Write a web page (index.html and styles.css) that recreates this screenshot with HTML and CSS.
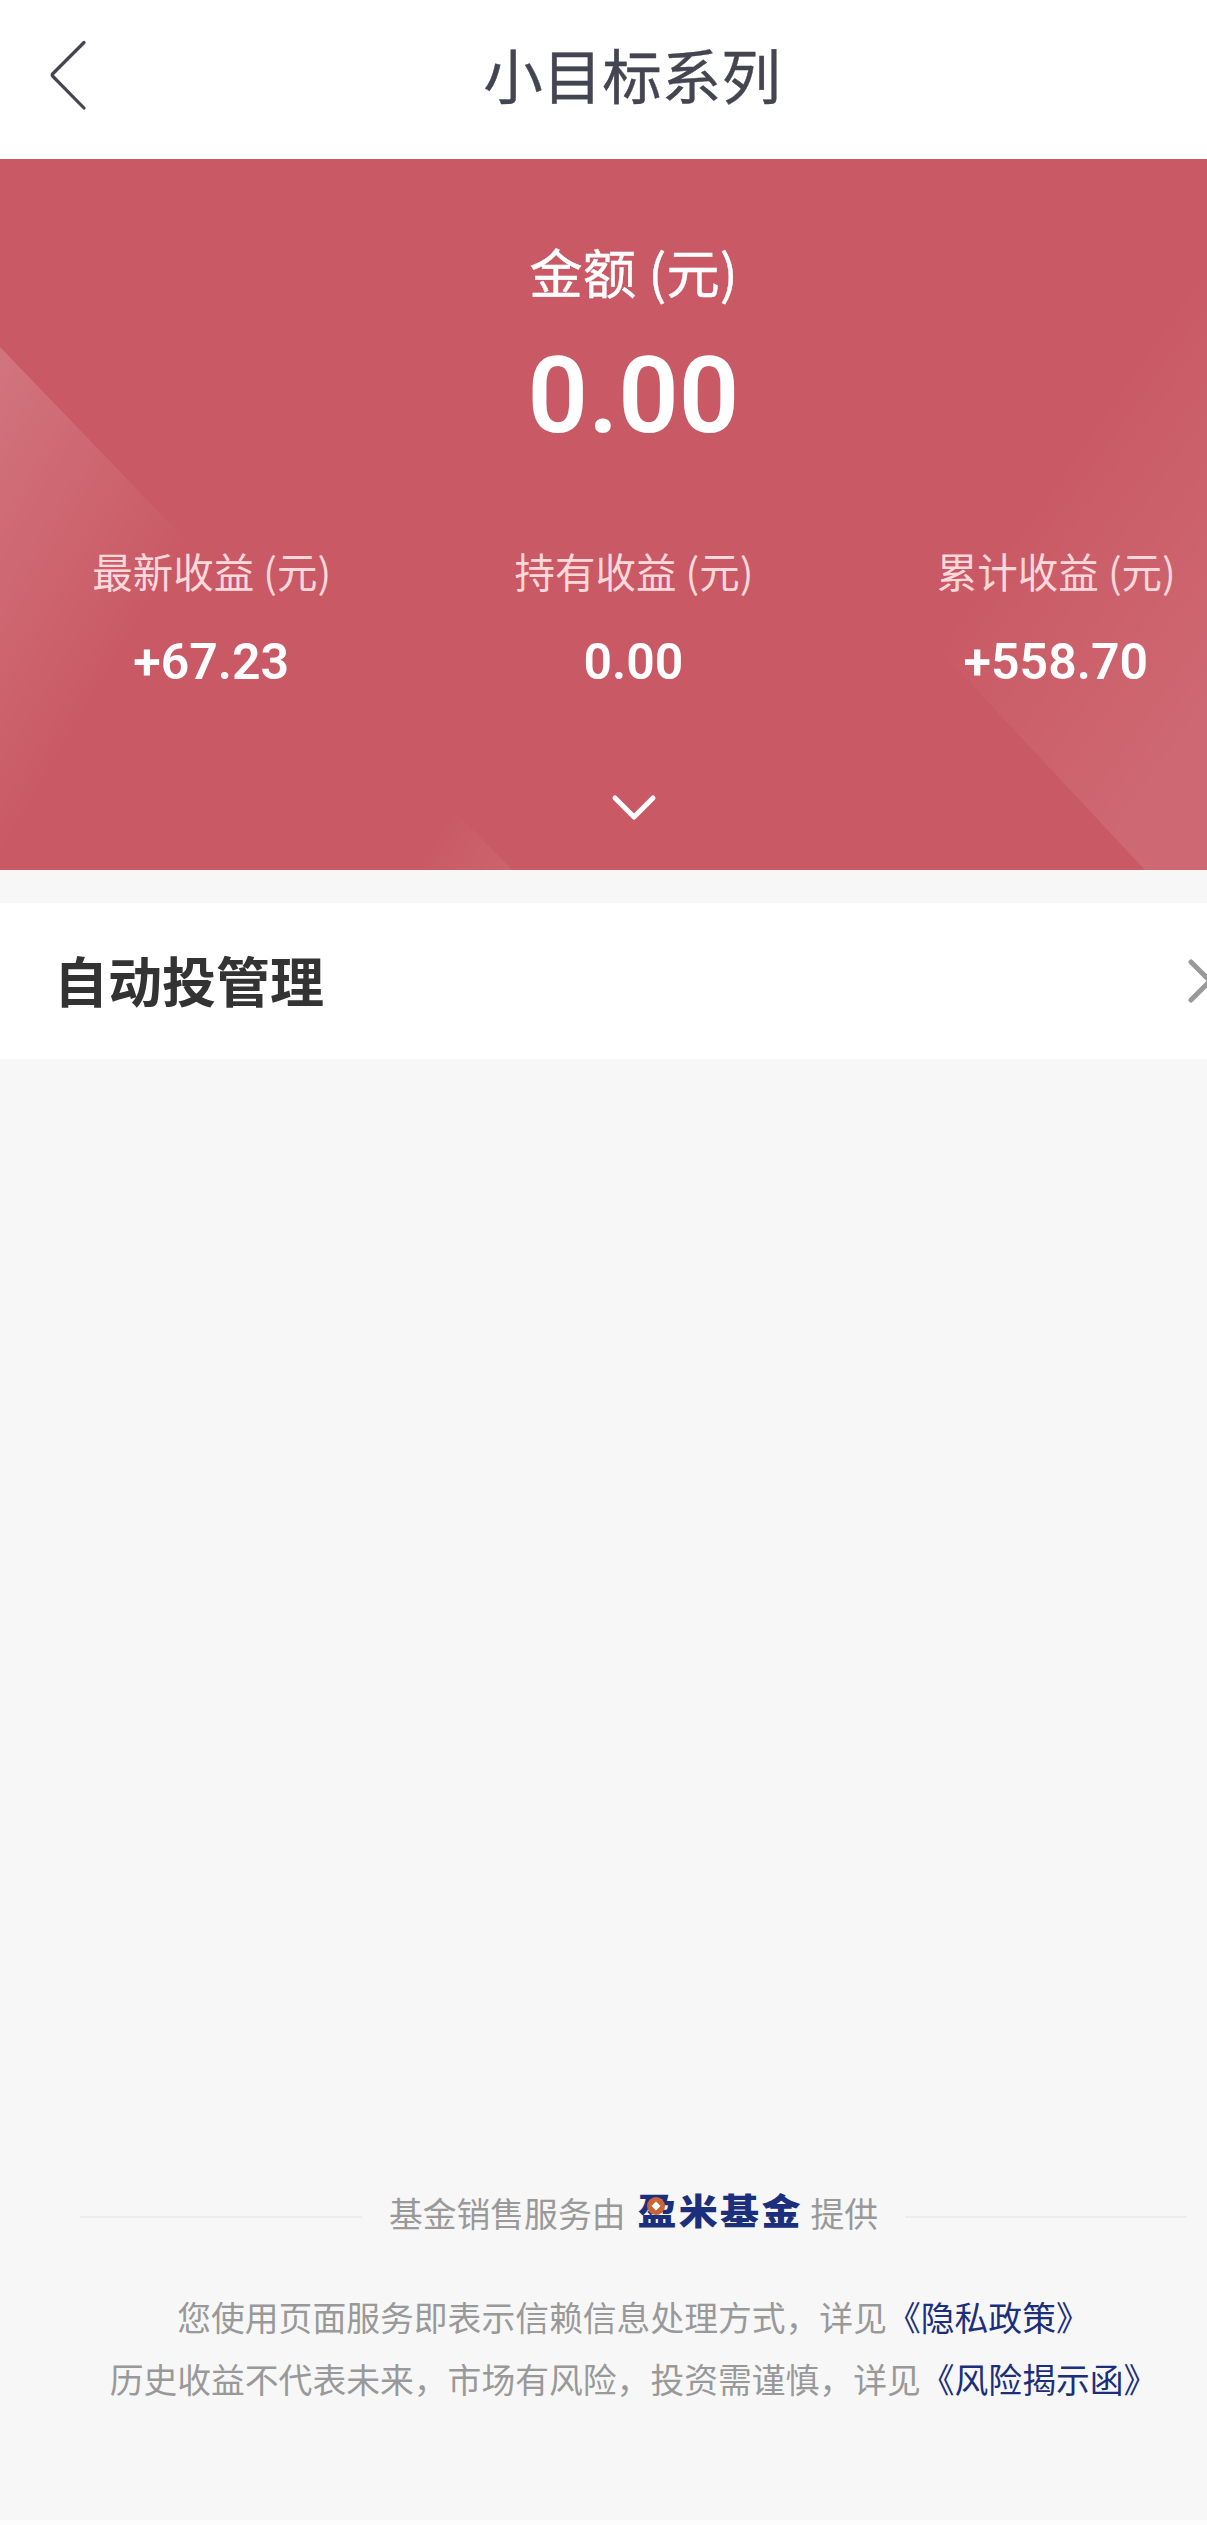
FILE: index.html
```html
<!DOCTYPE html>
<html lang="zh-CN">
<head>
<meta charset="utf-8">
<title>小目标系列</title>
<link rel="stylesheet" href="styles.css">
</head>
<body>
<div class="page">
  <header class="navbar">
    <svg class="back" width="40" height="72" viewBox="0 0 40 72"><path d="M36 3.500L5 34.500Q3.500 36 5 37.500L36 69"/></svg>
    <h1 class="title">小目标系列</h1>
  </header>
  <section class="summary">
    <svg class="facets" width="1267" height="711" viewBox="0 0 1267 711">
      <defs>
        <linearGradient id="left" gradientUnits="userSpaceOnUse" x1="100" y1="552" x2="-138" y2="411"><stop offset="0" stop-color="#fff" stop-opacity="0"/><stop offset="1" stop-color="#fff" stop-opacity=".17"/></linearGradient>
        <linearGradient id="right" gradientUnits="userSpaceOnUse" x1="920" y1="472" x2="1226" y2="686"><stop offset="0" stop-color="#fff" stop-opacity="0"/><stop offset=".75" stop-color="#fff" stop-opacity=".09"/><stop offset="1" stop-color="#fff" stop-opacity=".1"/></linearGradient>
        <linearGradient id="low" gradientUnits="userSpaceOnUse" x1="425" y1="675" x2="500" y2="722"><stop offset="0" stop-color="#fff" stop-opacity="0"/><stop offset="1" stop-color="#fff" stop-opacity=".06"/></linearGradient>
      </defs>
      <path fill="url(#left)" d="M0 188L212 408L15 711H0z"/>
      <path fill="url(#right)" d="M915 465L1267 -33V711H1145z"/>
      <path fill="url(#low)" d="M455 652L512 711H415z"/>
    </svg>
    <div class="total-label">金额 (元)</div>
    <div class="total">0.00</div>
    <div class="stats">
      <div class="stat"><span class="stat-label">最新收益 (元)</span><span class="stat-value">+67.23</span></div>
      <div class="stat"><span class="stat-label">持有收益 (元)</span><span class="stat-value">0.00</span></div>
      <div class="stat"><span class="stat-label">累计收益 (元)</span><span class="stat-value">+558.70</span></div>
    </div>
    <svg class="expand" width="48" height="30" viewBox="0 0 48 30"><path d="M5 5L24 24L43 5"/></svg>
  </section>
  <section class="entry">
    <h2 class="entry-title">自动投管理</h2>
    <svg class="more" width="30" height="48" viewBox="0 0 30 48"><path d="M5 5L24 24L5 43"/></svg>
  </section>
  <footer class="footer">
    <div class="provider">
      <i class="rule"></i>
      <span class="provider-text">基金销售服务由</span>
      <span class="brand"><span class="brand-name">盈米基金</span><svg class="coin" width="20" height="20" viewBox="0 0 20 20"><circle cx="10" cy="10" r="9" fill="#cb6537"/><path d="M10 5.500L14.500 10L10 14.500L5.500 10z" fill="#fff"/></svg></span>
      <span class="provider-text">提供</span>
      <i class="rule"></i>
    </div>
    <p class="note">您使用页面服务即表示信赖信息处理方式，详见<a class="link">《隐私政策》</a></p>
    <p class="note">历史收益不代表未来，市场有风险，投资需谨慎，详见<a class="link">《风险揭示函》</a></p>
  </footer>
  <div class="edge"></div>
</div>
</body>
</html>
```
FILE: styles.css
```css
* { box-sizing: border-box; margin: 0; padding: 0; }
html { overflow: hidden; }
body {
  overflow: hidden;
  background: #f7f7f7;
  font-family: "Noto Sans CJK SC", sans-serif;
  font-kerning: none;
}
.page {
  width: 1267px;
  height: 2525px;
  display: flex;
  flex-direction: column;
}
path { stroke-linejoin: round; }
.navbar {
  display: grid;
  grid-template-columns: 100px 1fr 100px;
  height: 159px;
  padding-bottom: 9px;
  align-items: center;
  background: #fff;
}
.back { margin-left: 48px; fill: none; stroke: #454552; stroke-width: 3.200; stroke-linecap: round; }
.title {
  padding: 0 3px 4px 0;
  text-align: center;
  font-size: 59.500px;
  line-height: 80px;
  font-weight: 400;
  color: #454552;
  -webkit-text-stroke: .4px #454552;
}
.summary {
  position: relative;
  display: flex;
  flex-direction: column;
  align-items: center;
  height: 711px;
  padding-top: 72px;
  background: #c95964;
  color: #fff;
}
.facets { position: absolute; left: 0; top: 0; }
.total-label, .total, .stats, .expand { position: relative; }
.total-label { font-size: 53.500px; line-height: 80px; -webkit-text-stroke: .4px #fff; }
.total {
  margin-top: 22px;
  font: 600 106px/126px Roboto, sans-serif;
}
.stats {
  display: grid;
  grid-template-columns: repeat(3, 1fr);
  width: 100%;
  margin-top: 82px;
}
.stat { display: flex; flex-direction: column; align-items: center; }
.stat-label { font-size: 40.500px; line-height: 60px; color: #ffd8dc; padding-left: 1px; }
.stat-value { margin-top: 31px; font: 600 50px/60px Roboto, sans-serif; }
.expand { margin-top: 101px; fill: none; stroke: #fff; stroke-width: 5; stroke-linecap: round; }
.entry {
  display: flex;
  align-items: center;
  justify-content: space-between;
  height: 156px;
  margin-top: 33px;
  padding: 0 51px 0 54px;
  background: #fff;
}
.entry-title { padding-bottom: 3px; font-size: 54px; line-height: 80px; font-weight: 700; color: #333; }
.more { fill: none; stroke: #999; stroke-width: 5; stroke-linecap: round; }
.footer { margin-top: auto; height: 336px; color: #999; font-size: 33.800px; }
.provider { display: flex; align-items: center; justify-content: center; height: 56px; }
.provider-text { line-height: 56px; padding-top: 2px; }
.rule { width: 282px; height: 2px; background: #ededed; margin: 9px 27px 0; }
.brand { position: relative; width: 163px; height: 40px; margin: 0 10px 7px 12px; }
.brand-name {
  display: block;
  font-size: 39px;
  line-height: 40px;
  font-weight: 900;
  letter-spacing: 2.300px;
  white-space: nowrap;
  color: #1b2f7c;
  transform: scaleY(.92);
}
.coin { position: absolute; left: 9px; top: 7px; }
.note { line-height: 62px; text-align: center; white-space: nowrap; }
.provider + .note { margin-top: 46px; }
.link { color: #1b2f7c; }
.edge { height: 5px; background: #fcfcfc; }
```
